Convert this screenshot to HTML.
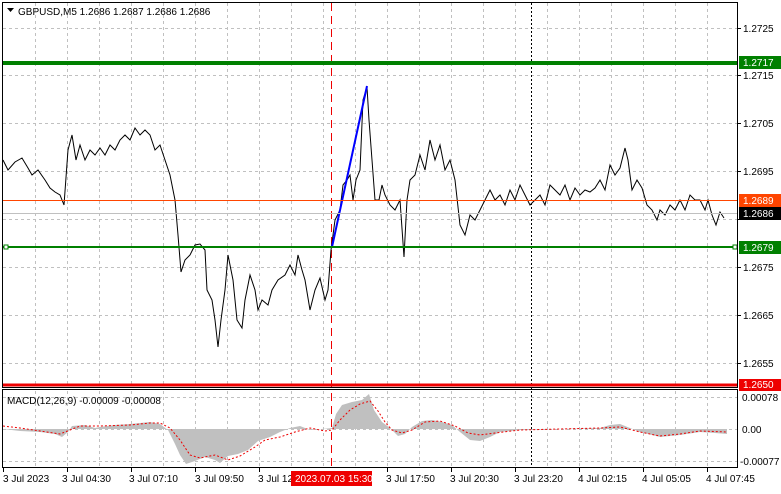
<!DOCTYPE html>
<html><head><meta charset="utf-8"><style>
body{margin:0;width:781px;height:489px;background:#fff;overflow:hidden;font-family:"Liberation Sans",sans-serif}
svg text{font-family:"Liberation Sans",sans-serif;font-size:10px}
</style></head><body>
<svg width="781" height="489" xmlns="http://www.w3.org/2000/svg">
<g stroke="#c0c0c0" stroke-dasharray="3,3" stroke-width="1">
<line x1="3" x2="737" y1="28.5" y2="28.5"/><line x1="3" x2="737" y1="75.5" y2="75.5"/><line x1="3" x2="737" y1="123.5" y2="123.5"/><line x1="3" x2="737" y1="171.5" y2="171.5"/><line x1="3" x2="737" y1="219.5" y2="219.5"/><line x1="3" x2="737" y1="267.5" y2="267.5"/><line x1="3" x2="737" y1="315.5" y2="315.5"/><line x1="3" x2="737" y1="363.5" y2="363.5"/>
<line x1="3" x2="737" y1="397.5" y2="397.5"/><line x1="3" x2="737" y1="429.5" y2="429.5"/><line x1="3" x2="737" y1="461.5" y2="461.5"/>
</g>
<g stroke="#c0c0c0" stroke-dasharray="3,3">
<path d="M35.5 3V387M67.5 3V387M99.5 3V387M131.5 3V387M163.5 3V387M195.5 3V387M227.5 3V387M259.5 3V387M291.5 3V387M323.5 3V387M355.5 3V387M387.5 3V387M419.5 3V387M451.5 3V387M483.5 3V387M515.5 3V387M547.5 3V387M579.5 3V387M611.5 3V387M643.5 3V387M675.5 3V387M707.5 3V387"/>
<path d="M35.5 391V467M67.5 391V467M99.5 391V467M131.5 391V467M163.5 391V467M195.5 391V467M227.5 391V467M259.5 391V467M291.5 391V467M323.5 391V467M355.5 391V467M387.5 391V467M419.5 391V467M451.5 391V467M483.5 391V467M515.5 391V467M547.5 391V467M579.5 391V467M611.5 391V467M643.5 391V467M675.5 391V467M707.5 391V467"/>
</g>
<line x1="531.5" x2="531.5" y1="3" y2="467" stroke="#000" stroke-dasharray="2,2"/>
<line x1="331.5" x2="331.5" y1="3" y2="467" stroke="#e00" stroke-dasharray="8,5"/>
<!-- MACD histogram -->
<polygon fill="#c0c0c0" points="3,429 20,431 40,432 55,434 62,437 68,432 72,426 85,425 95,428 100,427 115,425 130,424 150,422 160,424 168,430 175,444 180,455 186,464 195,461 205,457 215,460 220,463 228,456 238,454 248,450 258,441 270,437 280,432 290,428 300,426 310,430 322,429 332,428 336,414 342,405 352,402 362,400 369,394 374,410 382,422 390,428 398,436 405,434 412,427 422,421 432,420 442,422 452,425 460,432 470,440 480,441 490,437 500,432 520,430 560,429 600,428 610,425 620,424 630,428 640,432 660,437 680,435 700,432 715,433 727,434 727,429 3,429"/>
<polyline fill="none" stroke="#e00" stroke-dasharray="2,2" points="3,426 20,428 40,431 60,434 70,430 80,426 100,426 130,425 150,423 160,423 170,428 180,440 190,455 200,458 215,455 228,460 240,456 255,447 265,440 280,437 295,432 310,428 325,431 332,430 340,420 350,410 360,404 370,401 378,411 385,422 392,430 402,433 412,430 425,422 440,421 455,426 468,433 480,435 495,433 520,430 560,429 600,428 620,427 640,432 660,436 680,434 700,431 727,432"/>
<!-- price -->
<polyline fill="none" stroke="#000" stroke-width="1" points="3,160 8,170 15,162 22,158 28,168 32,175 38,170 45,180 50,188 55,192 60,195 64,205 68,150 72,135 76,160 80,145 85,160 90,150 95,155 100,148 105,155 110,145 115,150 120,140 125,135 130,140 135,128 140,135 145,130 150,135 155,150 160,145 165,160 170,175 175,200 178,235 181,272 185,260 190,255 195,245 200,244 205,250 207,290 212,300 215,320 218,347 221,320 225,290 228,255 233,280 237,320 242,328 245,300 250,275 255,290 258,310 262,300 268,305 272,290 278,280 285,275 290,265 295,275 298,255 302,270 305,280 310,310 315,290 320,278 325,300 328,290 331,250 335,220 340,210 343,185 347,180 350,175 353,200 356,180 360,170 363,100 367,87 369,120 372,160 375,200 379,200 382,185 385,195 390,205 395,210 400,200 404,257 407,200 410,180 415,175 420,155 425,170 430,140 435,160 440,145 445,170 450,160 455,180 460,225 465,235 470,215 475,220 480,210 485,200 490,190 495,200 500,195 505,205 510,190 515,200 520,185 525,195 530,205 535,200 540,195 545,205 550,185 555,190 560,195 565,185 570,200 575,188 580,195 585,190 590,192 595,188 600,180 605,190 610,165 615,175 620,168 625,148 628,160 632,190 637,180 642,188 647,205 652,210 657,220 660,210 665,215 670,205 675,210 680,200 685,210 690,195 695,200 700,200 705,210 708,200 712,215 716,225 720,212 724,218"/>
<line x1="332" y1="247" x2="367" y2="86" stroke="#0000ff" stroke-width="2"/>
<!-- levels -->
<line x1="3" x2="737" y1="63" y2="63" stroke="#008000" stroke-width="4"/>
<line x1="3" x2="737" y1="200.5" y2="200.5" stroke="#ff4500" stroke-width="1"/>
<line x1="3" x2="737" y1="213.5" y2="213.5" stroke="#c0c0c0" stroke-width="1"/>
<line x1="3" x2="737" y1="247" y2="247" stroke="#008000" stroke-width="2"/>
<rect x="4" y="245" width="4" height="4" fill="#fff" stroke="#008000"/>
<rect x="733" y="245" width="4" height="4" fill="#fff" stroke="#008000"/>
<line x1="3" x2="737" y1="385" y2="385" stroke="#e00" stroke-width="3"/>
<!-- frames -->
<rect x="2.5" y="2.5" width="735" height="385" fill="none" stroke="#000"/>
<rect x="2.5" y="389.5" width="735" height="78" fill="none" stroke="#000"/>
<!-- price axis -->
<g fill="#000">
<text x="743" y="32">1.2725</text><text x="743" y="79">1.2715</text><text x="743" y="127">1.2705</text><text x="743" y="175">1.2695</text><text x="743" y="271">1.2675</text><text x="743" y="319">1.2665</text><text x="743" y="367">1.2655</text>
<text x="742" y="401">0.00078</text><text x="742" y="433">0.00</text><text x="740" y="465">-0.00077</text>
</g>
<g stroke="#000"><path d="M737 28.5h4M737 75.5h4M737 123.5h4M737 171.5h4M737 219.5h4M737 267.5h4M737 315.5h4M737 363.5h4"/></g>
<rect x="739" y="56" width="42" height="13" fill="#008000"/><text x="743" y="66" fill="#fff">1.2717</text>
<rect x="739" y="194" width="42" height="13" fill="#ff4500"/><text x="743" y="204" fill="#fff">1.2689</text>
<rect x="739" y="207" width="42" height="13" fill="#000"/><text x="743" y="217" fill="#fff">1.2686</text>
<rect x="739" y="241" width="42" height="13" fill="#008000"/><text x="743" y="251" fill="#fff">1.2679</text>
<rect x="739" y="379" width="42" height="12" fill="#e00"/><text x="743" y="388" fill="#fff">1.2650</text>
<!-- time axis -->
<g stroke="#000"><path d="M3.5 468v4M67.5 468v4M131.5 468v4M195.5 468v4M259.5 468v4M387.5 468v4M451.5 468v4M515.5 468v4M579.5 468v4M643.5 468v4M707.5 468v4"/></g>
<g fill="#000">
<text x="3" y="482">3 Jul 2023</text><text x="62" y="482">3 Jul 04:30</text><text x="129" y="482">3 Jul 07:10</text><text x="195" y="482">3 Jul 09:50</text><text x="258" y="482">3 Jul 12</text><text x="386" y="482">3 Jul 17:50</text><text x="450" y="482">3 Jul 20:30</text><text x="514" y="482">3 Jul 23:20</text><text x="578" y="482">4 Jul 02:15</text><text x="642" y="482">4 Jul 05:05</text><text x="706" y="482">4 Jul 07:45</text>
</g>
<rect x="291" y="471" width="81" height="15" fill="#e00"/><text x="295" y="482" fill="#fff">2023.07.03 15:30</text>
<!-- labels -->
<path d="M7 8h7l-3.5 4z" fill="#000"/>
<text x="18" y="15" fill="#000">GBPUSD,M5  1.2686 1.2687 1.2686 1.2686</text>
<text x="7" y="404" fill="#000">MACD(12,26,9) -0.00009 -0.00008</text>
</svg>
</body></html>
